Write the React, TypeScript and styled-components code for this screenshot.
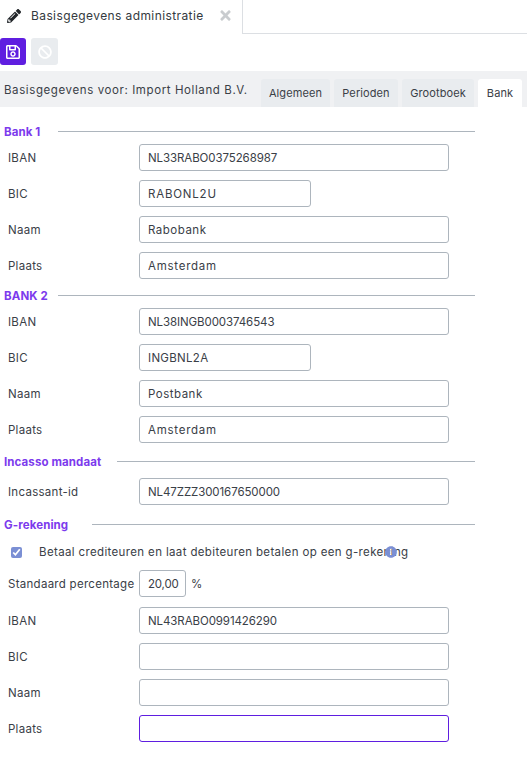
import React from "react";
import styled, { createGlobalStyle } from "styled-components";
import { FaPencilAlt, FaTimes, FaRegSave, FaBan, FaInfoCircle } from "react-icons/fa";

const GlobalStyle = createGlobalStyle`
  html, body {
    margin: 0;
    background: #ffffff;
    font-family: "Inter", "Liberation Sans", sans-serif;
    font-size: 11.5px;
    color: #3a4047;
  }
`;

const Page = styled.div`
  width: 527px;
  height: 777px;
  overflow: hidden;
`;

const TabBar = styled.div`
  display: flex;
  height: 34px;
`;

const DocTab = styled.div`
  display: flex;
  align-items: center;
  width: 243px;
  height: 34px;
  box-sizing: border-box;
  border-right: 1px solid #dcdfe3;
  padding: 0 9px 3px 7px;
  font-size: 12px;
  letter-spacing: 0.4px;
  color: #343a40;
`;

const DocTitle = styled.span`
  margin-left: 10px;
  flex: 1;
`;

const BarFill = styled.div`
  flex: 1;
  border-bottom: 1px solid #dcdfe3;
`;

const Toolbar = styled.div`
  display: flex;
  gap: 5px;
  padding-top: 4px;
  height: 33px;
`;

const ToolButton = styled.button<{ $primary?: boolean }>`
  display: flex;
  align-items: center;
  justify-content: center;
  width: ${(p) => (p.$primary ? 26 : 27)}px;
  height: 27px;
  padding: 0;
  border: 0;
  border-radius: 3px;
  background: ${(p) => (p.$primary ? "#5f1ee0" : "#e9ecef")};
  color: #ffffff;
`;

const SubHeader = styled.div`
  display: flex;
  justify-content: space-between;
  height: 36px;
  background: #f0f1f3;
  padding-left: 4px;
  padding-right: 5px;
`;

const SubTitle = styled.div`
  padding-top: 12px;
  letter-spacing: 0.6px;
`;

const Tabs = styled.div`
  display: flex;
  gap: 4px;
  padding-top: 8px;
`;

const Tab = styled.div<{ $active?: boolean; $width: number }>`
  display: flex;
  align-items: center;
  justify-content: center;
  width: ${(p) => p.$width}px;
  height: 28px;
  border-radius: 3px 3px 0 0;
  background: ${(p) => (p.$active ? "#ffffff" : "#e9ecef")};
  font-size: 11px;
  letter-spacing: 0.1px;
`;

const Form = styled.div`
  display: flex;
  flex-direction: column;
  padding: 17px 52px 0 4px;
`;

const Section = styled.div`
  display: flex;
  flex-direction: column;
`;

const Legend = styled.div<{ $top?: number; $after?: number }>`
  display: flex;
  align-items: center;
  height: 15px;
  margin-top: ${(p) => p.$top ?? 0}px;
  margin-bottom: ${(p) => p.$after ?? 5}px;
`;

const LegendText = styled.div<{ $width: number }>`
  width: ${(p) => p.$width}px;
  font-size: 11.5px;
  font-weight: 700;
  letter-spacing: 0.1px;
  color: #7c3aed;
`;

const LegendLine = styled.div`
  flex: 1;
  height: 1px;
  background: #adb5bd;
`;

const Row = styled.div<{ $after?: number }>`
  display: flex;
  align-items: center;
  height: 27px;
  margin-bottom: ${(p) => p.$after ?? 9}px;
`;

const Label = styled.label`
  width: 135px;
  padding-left: 4px;
  box-sizing: border-box;
  letter-spacing: 0.28px;
`;

const Field = styled.input<{ $width?: number; $focused?: boolean; $spacing?: number }>`
  width: ${(p) => p.$width ?? 310}px;
  height: 27px;
  box-sizing: border-box;
  padding: 0 0 0 8px;
  border: 1px solid ${(p) => (p.$focused ? "#5f1ee0" : "#adb5bd")};
  border-radius: 3px;
  background: #ffffff;
  font: inherit;
  letter-spacing: ${(p) => p.$spacing ?? 0.5}px;
  color: #3a4047;
  outline: none;
`;

const CheckRow = styled.div`
  display: flex;
  align-items: center;
  height: 16px;
  margin: 7px 0 10px;
  padding-left: 6px;
  position: relative;
  letter-spacing: 0.36px;
`;

const Check = styled.input`
  width: 11px;
  height: 11px;
  margin: 0 17px 0 1px;
  accent-color: #7b8fd4;
`;

const InfoBadge = styled.span`
  position: absolute;
  left: 381px;
  top: 2px;
  display: flex;
  color: #7b8fd4;
  font-size: 12px;
`;

const Percent = styled.span`
  margin-left: 5px;
`;

const AccountRows: React.FC<{ iban: string; bic: string; naam: string; plaats: string; bicSpacing?: number }> = ({
  iban,
  bic,
  naam,
  plaats,
  bicSpacing,
}) => (
  <>
    <Row>
      <Label>IBAN</Label>
      <Field readOnly value={iban} $spacing={-0.09} />
    </Row>
    <Row>
      <Label>BIC</Label>
      <Field readOnly value={bic} $width={172} $spacing={bicSpacing ?? 0.3} />
    </Row>
    <Row>
      <Label>Naam</Label>
      <Field readOnly value={naam} />
    </Row>
    <Row>
      <Label>Plaats</Label>
      <Field readOnly value={plaats} $spacing={0.75} />
    </Row>
  </>
);

const App: React.FC = () => (
  <Page>
    <GlobalStyle />
    <TabBar>
      <DocTab>
        <FaPencilAlt size={14} color="#212529" />
        <DocTitle>Basisgegevens administratie</DocTitle>
        <FaTimes size={15} color="#c9cccf" />
      </DocTab>
      <BarFill />
    </TabBar>
    <Toolbar>
      <ToolButton $primary>
        <FaRegSave size={16} />
      </ToolButton>
      <ToolButton>
        <FaBan size={14} />
      </ToolButton>
    </Toolbar>
    <SubHeader>
      <SubTitle>Basisgegevens voor: Import Holland B.V.</SubTitle>
      <Tabs>
        <Tab $width={69}>Algemeen</Tab>
        <Tab $width={64}>Perioden</Tab>
        <Tab $width={72}>Grootboek</Tab>
        <Tab $width={44} $active>
          Bank
        </Tab>
      </Tabs>
    </SubHeader>
    <Form>
      <Section>
        <Legend>
          <LegendText $width={54}>Bank 1</LegendText>
          <LegendLine />
        </Legend>
        <AccountRows
          iban="NL33RABO0375268987"
          bic="RABONL2U"
          naam="Rabobank"
          plaats="Amsterdam"
          bicSpacing={0.8}
        />
      </Section>
      <Section>
        <Legend>
          <LegendText $width={54}>BANK 2</LegendText>
          <LegendLine />
        </Legend>
        <AccountRows iban="NL38INGB0003746543" bic="INGBNL2A" naam="Postbank" plaats="Amsterdam" />
      </Section>
      <Section>
        <Legend $top={2} $after={9}>
          <LegendText $width={113}>Incasso mandaat</LegendText>
          <LegendLine />
        </Legend>
        <Row>
          <Label>Incassant-id</Label>
          <Field readOnly value="NL47ZZZ300167650000" $spacing={-0.09} />
        </Row>
      </Section>
      <Section>
        <Legend $top={3}>
          <LegendText $width={88}>G-rekening</LegendText>
          <LegendLine />
        </Legend>
        <CheckRow>
          <Check type="checkbox" defaultChecked />
          Betaal crediteuren en laat debiteuren betalen op een g-rekening
          <InfoBadge>
            <FaInfoCircle />
          </InfoBadge>
        </CheckRow>
        <Row $after={10}>
          <Label>Standaard percentage</Label>
          <Field readOnly value="20,00" $width={47} $spacing={-0.2} />
          <Percent>%</Percent>
        </Row>
        <Row>
          <Label>IBAN</Label>
          <Field readOnly value="NL43RABO0991426290" $spacing={-0.09} />
        </Row>
        <Row>
          <Label>BIC</Label>
          <Field readOnly value="" />
        </Row>
        <Row>
          <Label>Naam</Label>
          <Field readOnly value="" />
        </Row>
        <Row>
          <Label>Plaats</Label>
          <Field readOnly value="" $focused />
        </Row>
      </Section>
    </Form>
  </Page>
);

export default App;
